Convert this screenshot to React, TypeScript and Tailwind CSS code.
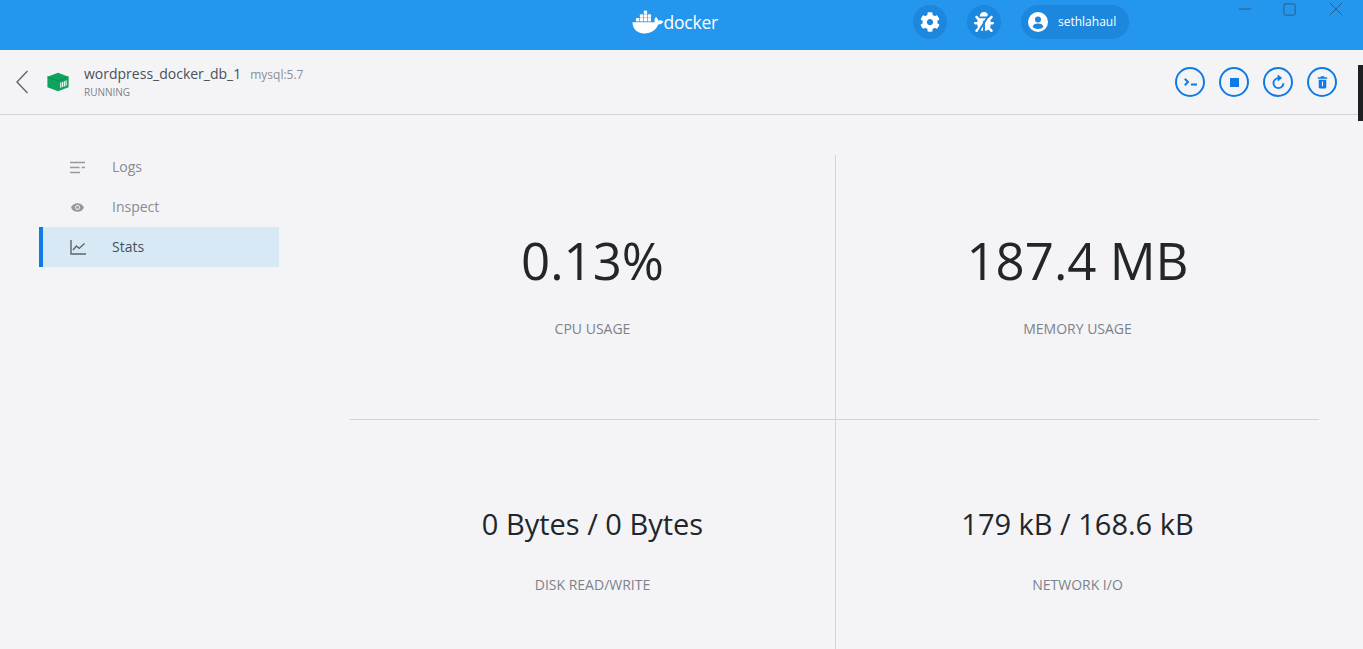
import { Square, Minus, X } from "lucide-react";
import { FaBug, FaCog } from "react-icons/fa";

function Whale() {
  return (
    <svg width="33" height="24" viewBox="0 0 33 24" fill="white">
      <rect x="4" y="8" width="3.4" height="3.4" />
      <rect x="8" y="8" width="3.4" height="3.4" />
      <rect x="12" y="8" width="3.4" height="3.4" />
      <rect x="16" y="8" width="3.4" height="3.4" />
      <rect x="8" y="4.2" width="3.4" height="3.4" />
      <rect x="12" y="4.2" width="3.4" height="3.4" />
      <rect x="16" y="4.2" width="3.4" height="3.4" />
      <rect x="12" y="0.4" width="3.4" height="3.4" />
      <path d="M0.5 12.3H23.2C22.6 10.6 22.8 8.3 24.3 6.8C25.7 7.9 26.5 9.3 26.6 10.6C28.2 10 30.4 10.2 32 11.4C31.1 13.6 28.8 14.6 26.6 14.5C24.6 20 19.6 23.6 12.5 23.6C4.8 23.6 0.6 18.8 0.5 12.3Z" />
    </svg>
  );
}

function UserBadge() {
  return (
    <svg width="20" height="20" viewBox="0 0 20 20">
      <circle cx="10" cy="10" r="10" fill="white" />
      <circle cx="10" cy="7.4" r="3" fill="#1c87dc" />
      <path d="M4.6 15c.4-2.6 2.6-3.6 5.4-3.6s5 1 5.4 3.6c-1.4 1.3-3.3 2-5.4 2s-4-.7-5.4-2Z" fill="#1c87dc" />
    </svg>
  );
}

function ContainerIcon() {
  return (
    <svg width="22" height="20" viewBox="0 0 22 20">
      <path d="M11 .8 21.6 4.8v10.4L11 19.2.4 15.2V4.8Z" fill="#0fa360" />
      <path d="M.4 4.8 11 8.8l10.6-4" fill="none" stroke="#0b8a50" strokeWidth="0.8" />
      <path d="M12.4 10.4 20 7.6v6.8l-7.6 2.8Z" fill="#0fa360" />
      <path d="M13.8 10.5v5.2M15.6 9.9v5.2M17.4 9.2v5.2M19.1 8.6v5.2" stroke="white" strokeWidth="1.1" />
    </svg>
  );
}

function ActionButton({ children }: { children: React.ReactNode }) {
  return (
    <button className="flex h-[30px] w-[30px] items-center justify-center rounded-full border-2 border-[#0f7be5] text-[#0f7be5]">
      {children}
    </button>
  );
}

function NavItem({ label, active, icon }: { label: string; active?: boolean; icon: React.ReactNode }) {
  return (
    <div
      className={
        active
          ? "flex h-10 w-[240px] items-center border-l-[4px] border-[#0f7be5] bg-[#d8e9f6] pl-[27px] text-[#47505a]"
          : "flex h-10 w-[240px] items-center pl-[31px] text-[#868b92]"
      }
    >
      <span className="flex w-[42px] items-center">{icon}</span>
      <span className="text-sm">{label}</span>
    </div>
  );
}

function Stat({ value, label, big, top }: { value: string; label: string; big?: boolean; top: string }) {
  return (
    <div className={"flex flex-col items-center " + top}>
      <div className={big ? "text-[51px] leading-[68px] text-[#22262b]" : "text-[29px] leading-[38px] text-[#22262b]"}>
        {value}
      </div>
      <div className={big ? "mt-[25px] text-sm leading-[19px] text-[#7d828a]" : "mt-[32px] text-sm leading-[19px] text-[#7d828a]"}>
        {label}
      </div>
    </div>
  );
}

export default function App() {
  return (
    <div className="relative h-[649px] w-[1363px] overflow-hidden bg-[#f4f4f6] font-['Open_Sans',sans-serif]">
      <header className="flex h-[50px] items-start bg-[#2496ed] pl-[632px]">
        <div className="mt-[9px] flex w-[86px] items-center text-white">
          <Whale />
          <span className="-ml-[1px] mt-[1px] text-[17.5px] leading-6 tracking-[-0.2px]">docker</span>
        </div>
        <div className="ml-[195px] mt-[5px] flex items-center gap-[20px]">
          <button className="flex h-[34px] w-[34px] items-center justify-center rounded-full bg-[#1c87dc] text-white">
            <FaCog size={20} />
          </button>
          <button className="relative flex h-[34px] w-[34px] items-center justify-center rounded-full bg-[#1c87dc] text-white">
            <FaBug size={20} />
            <svg className="absolute left-[7px] top-[7px]" width="20" height="20" viewBox="0 0 20 20">
              <path d="M5 19 15.5 2" stroke="#1c87dc" strokeWidth="2" />
            </svg>
          </button>
          <div className="flex h-[34px] w-[108px] items-center rounded-full bg-[#1c87dc] pl-[7px] text-white">
            <UserBadge />
            <span className="ml-[10px] text-xs">sethlahaul</span>
          </div>
        </div>
      </header>

      <div className="absolute right-[15px] top-0 flex h-[18px] items-center gap-[27px] text-[#2f5f8a]">
        <Minus size={20} strokeWidth={1} absoluteStrokeWidth />
        <Square size={15} strokeWidth={1} absoluteStrokeWidth />
        <X size={24} strokeWidth={1} absoluteStrokeWidth />
      </div>
      <div className="absolute right-0 top-[65px] h-[56px] w-[5px] bg-[#1e1f22]" />

      <div className="flex h-[65px] items-center border-b border-[#d2d3d6] pl-[16px] pr-[26px]">
        <svg width="12" height="24" viewBox="0 0 12 24" fill="none" stroke="#5f656c" strokeWidth="1.4">
          <path d="M11.5 1 1 12l10.5 11" />
        </svg>
        <div className="ml-[19px]">
          <ContainerIcon />
        </div>
        <div className="ml-[15px] -mt-[1px]">
          <div className="flex items-baseline leading-[20px]">
            <span className="text-sm text-[#4a5058]">wordpress_docker_db_1</span>
            <span className="ml-[9px] text-xs text-[#8a8f95]">mysql:5.7</span>
          </div>
          <div className="mt-[1px] text-[10px] leading-[14px] text-[#7d828a]">RUNNING</div>
        </div>
        <div className="ml-auto flex gap-[14px]">
          <ActionButton>
            <svg width="13" height="8" viewBox="0 0 13 8" fill="none" stroke="currentColor" strokeWidth="2">
              <path d="M.8.8 4 4 .8 7.2" />
              <path d="M7 6.5h6" />
            </svg>
          </ActionButton>
          <ActionButton>
            <div className="h-[9px] w-[9px] bg-[#0f7be5]" />
          </ActionButton>
          <ActionButton>
            <svg width="15" height="17" viewBox="0 0 16 18" fill="none" stroke="currentColor" strokeWidth="2">
              <path d="M8 4.4A5.3 5.3 0 1 0 13.2 9.7" />
              <path d="M7.4 1v6.4L11.6 4.2Z" fill="currentColor" strokeWidth="0.6" />
            </svg>
          </ActionButton>
          <ActionButton>
            <svg width="11" height="13" viewBox="0 0 14 16" fill="currentColor">
              <path d="M5 0h4l.6 1.4H13v1.7H1V1.4h3.4Z" />
              <path d="M2.2 4.6h9.6v9.2c0 1-.7 1.7-1.7 1.7H3.9c-1 0-1.7-.7-1.7-1.7Z" />
              <path d="M7 6.6v6.2" stroke="#f4f4f6" strokeWidth="1.4" />
            </svg>
          </ActionButton>
        </div>
      </div>

      <div className="flex">
        <nav className="w-[350px] pl-[39px] pt-[32px]">
          <NavItem
            label="Logs"
            icon={
              <svg width="16" height="13" viewBox="0 0 16 13" fill="none" stroke="#95999f" strokeWidth="1.6">
                <path d="M0 1.5h15M0 6.5h9.5M11.5 6.5H15M0 11.5h10" />
              </svg>
            }
          />
          <NavItem
            label="Inspect"
            icon={
              <svg width="13" height="9" viewBox="0 0 15 10" className="ml-[1px]">
                <path fillRule="evenodd" fill="#95999f" d="M7.5 0C11 0 13.8 2 15 5c-1.2 3-4 5-7.5 5S1.2 8 0 5C1.2 2 4 0 7.5 0ZM7.5 2.2a2.8 2.8 0 1 0 0 5.6 2.8 2.8 0 0 0 0-5.6Z" />
                <circle cx="7.5" cy="5" r="1.6" fill="#95999f" />
              </svg>
            }
          />
          <NavItem
            active
            label="Stats"
            icon={
              <svg width="16" height="15" viewBox="0 0 16 15" fill="none" stroke="#5c636b" strokeWidth="1.4">
                <path d="M1 0v14h15" />
                <path d="M3 10l3.4-4 2.8 2.4L14.5 3.5" />
              </svg>
            }
          />
        </nav>
        <div className="mt-[40px] grid h-[494px] w-[969px] grid-cols-[486px_483px] grid-rows-[265px_229px]">
          <div className="border-b border-r border-[#d2d3d6]">
            <Stat big value="0.13%" label="CPU USAGE" top="pt-[71px]" />
          </div>
          <div className="border-b border-[#d2d3d6]">
            <Stat big value="187.4 MB" label="MEMORY USAGE" top="pt-[71px]" />
          </div>
          <div className="border-r border-[#d2d3d6]">
            <Stat value="0 Bytes / 0 Bytes" label="DISK READ/WRITE" top="pt-[85px]" />
          </div>
          <div>
            <Stat value="179 kB / 168.6 kB" label="NETWORK I/O" top="pt-[85px]" />
          </div>
        </div>
      </div>
    </div>
  );
}
